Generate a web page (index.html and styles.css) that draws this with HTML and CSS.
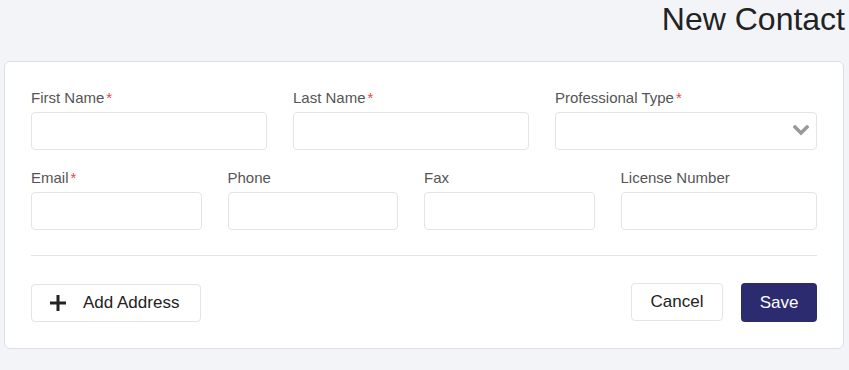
FILE: index.html
```html
<!DOCTYPE html>
<html>
<head>
    <title>New Contact</title>
    <link rel="stylesheet" href="styles.css">
</head>
<body>
    <div class="page">
        <h1 class="page-title">New Contact</h1>

        <div class="card">
            <div class="row row-3">
                <div class="field">
                    <label>First Name<span class="req">*</span></label>
                    <input type="text">
                </div>
                <div class="field">
                    <label>Last Name<span class="req">*</span></label>
                    <input type="text">
                </div>
                <div class="field">
                    <label>Professional Type<span class="req">*</span></label>
                    <div class="select">
                        <input type="text" readonly>
                        <svg class="chevron" width="16" height="11" viewBox="0 0 16 11">
                            <path d="M2 2 L8 8 L14 2" fill="none" stroke="#999" stroke-width="3.4" stroke-linecap="square"/>
                        </svg>
                    </div>
                </div>
            </div>

            <div class="row row-4">
                <div class="field">
                    <label>Email<span class="req">*</span></label>
                    <input type="text">
                </div>
                <div class="field">
                    <label>Phone</label>
                    <input type="text">
                </div>
                <div class="field">
                    <label>Fax</label>
                    <input type="text">
                </div>
                <div class="field">
                    <label>License Number</label>
                    <input type="text">
                </div>
            </div>

            <hr class="divider">

            <div class="actions">
                <button class="btn btn-add">
                    <svg width="16" height="16" viewBox="0 0 16 16">
                        <path d="M8 0 V16 M0 8 H16" stroke="#222" stroke-width="3"/>
                    </svg>
                    <span>Add Address</span>
                </button>
                <div class="actions-right">
                    <button class="btn btn-cancel">Cancel</button>
                    <button class="btn btn-save">Save</button>
                </div>
            </div>
        </div>
    </div>
</body>
</html>
```

FILE: styles.css
```css
body {
    font-family: "Liberation Sans", Arial, sans-serif;
    background: #f3f4f8;
    margin: 0;
    color: #333;
}

.page {
    padding: 0 5px 0 4px;
}

.page-title {
    margin: 0 -1px 0 0;
    padding-top: 2px;
    height: 59px;
    text-align: right;
    font-size: 32px;
    font-weight: normal;
    color: #222;
    line-height: 34px;
}

.card {
    background: white;
    border: 1px solid #dcdfe6;
    border-radius: 6px;
    padding: 26px 26px 26px 26px;
}

.row {
    display: flex;
}

.row + .row {
    margin-top: 18px;
}

.field {
    box-sizing: border-box;
    padding-right: 26px;
}

.row-3 .field {
    flex: 0 0 33.3333%;
}

.row-4 .field {
    flex: 0 0 25%;
}

.field:last-child {
    padding-right: 0;
}

.field label {
    display: block;
    font-size: 15px;
    color: #555;
    line-height: 20px;
    margin-bottom: 4px;
}

.req {
    color: #f0434a;
    margin-left: 2px;
}

.field input {
    display: block;
    box-sizing: border-box;
    width: 100%;
    height: 38px;
    border: 1px solid #e2e4e9;
    border-radius: 4px;
    background: white;
    font-size: 15px;
    padding: 0 10px;
    outline: none;
}

.select {
    position: relative;
}

.chevron {
    position: absolute;
    right: 8px;
    top: 13px;
}

.divider {
    border: none;
    border-top: 1px solid #e4e4e4;
    margin: 25px 0 27px 0;
}

.actions {
    display: flex;
    justify-content: space-between;
    align-items: center;
}

.actions-right {
    display: flex;
    gap: 18px;
}

.btn {
    font-family: "Liberation Sans", Arial, sans-serif;
    font-size: 17px;
    height: 38px;
    border-radius: 4px;
    cursor: pointer;
}

.btn-add {
    display: flex;
    align-items: center;
    gap: 17px;
    width: 170px;
    padding: 0 0 0 18px;
    background: white;
    border: 1px solid #e2e4e9;
    color: #222;
}

.btn-cancel {
    width: 92px;
    background: white;
    border: 1px solid #e2e4e9;
    color: #222;
}

.btn-save {
    width: 76px;
    height: 39px;
    background: #2d2b6f;
    border: none;
    color: white;
}
```
